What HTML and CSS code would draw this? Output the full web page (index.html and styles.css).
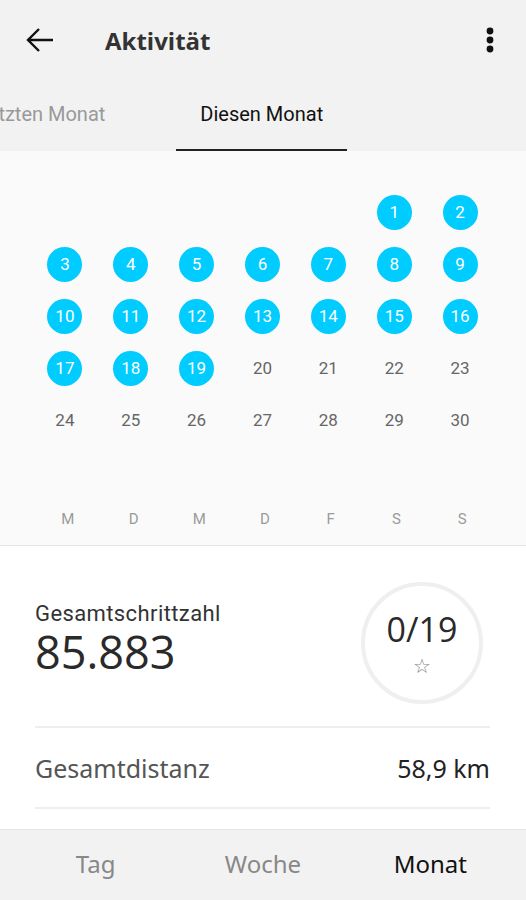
FILE: index.html
```html
<!DOCTYPE html>
<html>
  <head>
    <title>Aktivität</title>
    <link rel="stylesheet" href="styles.css">
  </head>
  <body>
    <div class="app">
      <header class="topbar">
        <svg class="back" width="28" height="26" viewBox="0 0 28 26">
          <path d="M27 13H2M13 2L2 13l11 11" fill="none" stroke="#111" stroke-width="2.4"/>
        </svg>
        <h1 class="title">Aktivität</h1>
        <svg class="menu" width="8" height="26" viewBox="0 0 8 26">
          <circle cx="4" cy="4" r="3.4" fill="#111"/>
          <circle cx="4" cy="13" r="3.4" fill="#111"/>
          <circle cx="4" cy="22" r="3.4" fill="#111"/>
        </svg>
      </header>

      <nav class="tabs">
        <div class="tab tab-prev">Letzten Monat</div>
        <div class="tab tab-active">Diesen Monat</div>
      </nav>

      <section class="calendar">
        <div class="days">
          <span></span><span></span><span></span><span></span><span></span>
          <span class="day done">1</span>
          <span class="day done">2</span>
          <span class="day done">3</span>
          <span class="day done">4</span>
          <span class="day done">5</span>
          <span class="day done">6</span>
          <span class="day done">7</span>
          <span class="day done">8</span>
          <span class="day done">9</span>
          <span class="day done">10</span>
          <span class="day done">11</span>
          <span class="day done">12</span>
          <span class="day done">13</span>
          <span class="day done">14</span>
          <span class="day done">15</span>
          <span class="day done">16</span>
          <span class="day done">17</span>
          <span class="day done">18</span>
          <span class="day done">19</span>
          <span class="day">20</span>
          <span class="day">21</span>
          <span class="day">22</span>
          <span class="day">23</span>
          <span class="day">24</span>
          <span class="day">25</span>
          <span class="day">26</span>
          <span class="day">27</span>
          <span class="day">28</span>
          <span class="day">29</span>
          <span class="day">30</span>
        </div>
        <div class="weekdays">
          <span>M</span><span>D</span><span>M</span><span>D</span><span>F</span><span>S</span><span>S</span>
        </div>
      </section>

      <section class="stats">
        <div class="steps-row">
          <div class="steps">
            <div class="steps-label">Gesamtschrittzahl</div>
            <div class="steps-value">85.883</div>
          </div>
          <div class="goal">
            <div class="goal-value">0/19</div>
            <div class="goal-star">☆</div>
          </div>
        </div>
        <div class="distance-row">
          <span class="distance-label">Gesamtdistanz</span>
          <span class="distance-value">58,9 km</span>
        </div>
      </section>

      <footer class="bottom-nav">
        <div class="nav-item">Tag</div>
        <div class="nav-item">Woche</div>
        <div class="nav-item nav-active">Monat</div>
      </footer>
    </div>
  </body>
</html>
```

FILE: styles.css
```css
body {
  margin: 0;
  font-family: Roboto, "Noto Sans", sans-serif;
  background: #fff;
}
.app {
  width: 526px;
  height: 900px;
  display: flex;
  flex-direction: column;
  overflow: hidden;
}

/* top bar */
.topbar {
  height: 80px;
  background: #f2f2f2;
  display: flex;
  align-items: center;
  padding: 0 32px 0 26px;
}
.back {
  margin-right: 51px;
}
.title {
  flex: 1;
  margin: 0;
  font-family: "Open Sans", sans-serif;
  font-size: 24px;
  font-weight: 700;
  color: #333;
}

/* tabs */
.tabs {
  height: 71px;
  background: #f2f2f2;
  display: flex;
  overflow: hidden;
}
.tab {
  font-size: 20px;
  line-height: 69px;
  padding: 0 24px;
  color: #999;
  white-space: nowrap;
}
.tab-prev {
  margin-left: -47px;
  margin-right: 47px;
}
.tab-active {
  color: #111;
  border-bottom: 2px solid #222;
}

/* calendar */
.calendar {
  background: #fafafa;
  border-bottom: 1px solid #e6e6e6;
  padding: 35px 33px 16px 32px;
  height: 395px;
  box-sizing: border-box;
}
.days {
  display: grid;
  grid-template-columns: repeat(7, 1fr);
  grid-auto-rows: 52px;
}
.day {
  justify-self: center;
  align-self: center;
  width: 35px;
  height: 35px;
  border-radius: 50%;
  display: flex;
  align-items: center;
  justify-content: center;
  font-size: 17px;
  color: #666;
}
.done {
  background: #00ccff;
  color: #fff;
}
.weekdays {
  display: grid;
  grid-template-columns: repeat(7, 1fr);
  margin-top: 63px;
  margin-left: 3px;
  margin-right: -2px;
  font-size: 15px;
  line-height: 20px;
  color: #9a9a9a;
  text-align: center;
}

/* stats */
.stats {
  flex: 1;
  background: #fff;
  padding: 0 36px 0 35px;
}
.steps-row {
  display: flex;
  align-items: center;
  justify-content: space-between;
  height: 182px;
  padding-top: 13px;
  box-sizing: border-box;
  border-bottom: 2px solid #eee;
}
.steps {
  margin-top: -8px;
}
.steps-label {
  font-size: 22px;
  line-height: 26px;
  letter-spacing: 0.4px;
  color: #333;
}
.steps-value {
  font-family: "Open Sans", sans-serif;
  font-size: 45px;
  line-height: 50px;
  color: #2a2a2a;
}
.goal {
  width: 114px;
  height: 114px;
  border: 4px solid #efefef;
  border-radius: 50%;
  display: flex;
  flex-direction: column;
  align-items: center;
  justify-content: center;
  margin-right: 7px;
}
.goal-value {
  font-family: "Open Sans", sans-serif;
  font-size: 34px;
  line-height: 38px;
  color: #2a2a2a;
}
.goal-star {
  font-size: 20px;
  line-height: 20px;
  color: #888;
  margin-top: 8px;
}
.distance-row {
  height: 79px;
  display: flex;
  align-items: center;
  justify-content: space-between;
  border-bottom: 2px solid #eee;
  font-family: "Noto Sans", sans-serif;
  font-size: 25px;
}
.distance-label {
  color: #555;
}
.distance-value {
  color: #222;
}

/* bottom nav */
.bottom-nav {
  height: 70px;
  background: #f2f2f2;
  border-top: 1px solid #e6e6e6;
  display: flex;
  padding: 0 12px;
  font-family: "Noto Sans", sans-serif;
  font-size: 24px;
}
.nav-item {
  flex: 1;
  text-align: center;
  line-height: 68px;
  color: #888;
}
.nav-active {
  color: #111;
}
```
